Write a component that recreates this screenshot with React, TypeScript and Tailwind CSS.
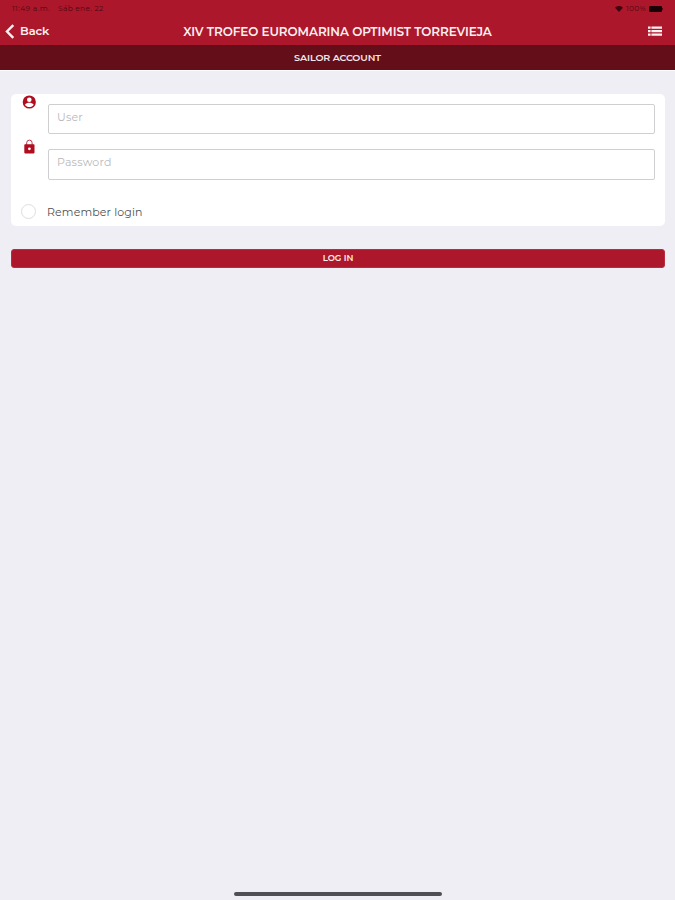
const StatusBar = () => (
  <div className="flex h-[17px] items-center justify-between pr-3 pl-[12px] text-[7.5px] text-[#4d0812]">
    <div className="flex gap-[8px] whitespace-pre">
      <span className="tracking-[0.4px]">11:49 a.m.</span>
      <span className="tracking-[0.3px]">Sáb ene. 22</span>
    </div>
    <div className="flex items-center">
      <svg className="mr-[3px] h-[6px] w-[8px]" viewBox="0 0 16 12" fill="#3d0710">
        <path d="M8 12 0 3.5C4.5-1 11.5-1 16 3.5Z" />
      </svg>
      <span className="mr-[3px] tracking-[0.3px]">100%</span>
      <svg className="h-[6px] w-[14px]" viewBox="0 0 14 6" fill="#180206">
        <rect width="13" height="6" rx="1.2" />
        <rect x="13.400" y="2" width="0.600" height="2" />
      </svg>
    </div>
  </div>
);

const NavBar = () => (
  <div className="grid h-7 grid-cols-[1fr_auto_1fr] items-center text-[#fdf0f1]">
    <button className="flex items-center pl-[5px]">
      <svg className="h-[15px] w-[10px]" viewBox="0 0 10 15" fill="none" stroke="currentColor" strokeWidth="2.4">
        <path d="M8.3 1.200 2 7.5 8.3 13.800" />
      </svg>
      <span className="ml-[5px] pt-px text-[11.500px] leading-none font-semibold tracking-[-0.100px]">Back</span>
    </button>
    <h1 className="pt-px text-[12px] leading-none font-semibold tracking-[-0.070px] whitespace-nowrap">
      XIV TROFEO EUROMARINA OPTIMIST TORREVIEJA
    </h1>
    <button className="flex justify-end pr-[13px]">
      <svg className="h-[10px] w-[14px]" viewBox="0 0 14 10" fill="currentColor">
        <path d="M0 .5h2.6v2.200H0zM3.400.5H14v2.200H3.400zM0 4h2.6v2.200H0zM3.400 4H14v2.200H3.400zM0 7.5h2.6v2.200H0zM3.400 7.5H14v2.200H3.400z" />
      </svg>
    </button>
  </div>
);

const UserIcon = () => (
  <svg className="h-[14px] w-[14px]" viewBox="0 0 14 14">
    <circle cx="7.3" cy="7" r="6.6" fill="#b00d20" />
    <circle cx="7.3" cy="4.7" r="2.3" fill="white" />
    <path d="M2.900 9.8C3.800 8.3 5.800 7.8 7.300 7.8s3.5.5 4.4 2C10.700 11.300 9.100 12.100 7.300 12.100S3.900 11.300 2.900 9.800Z" fill="white" />
  </svg>
);

const LockIcon = () => (
  <svg className="h-[15px] w-[14px]" viewBox="0 0 14 15">
    <path d="M4.700 6V3.800a2.700 2.700 0 0 1 5.400 0V6" fill="none" stroke="#b9364a" strokeWidth="1" />
    <rect x="2.300" y="5.300" width="10.200" height="9.100" rx="0.800" fill="#b00d20" />
    <circle cx="7.400" cy="9.800" r="1.400" fill="white" />
  </svg>
);

const inputClass =
  'block w-full rounded-[2px] border border-[#cfcfd1] bg-white pb-[5px] pl-[8px] text-[11px] tracking-[0.200px] outline-none placeholder:text-[#b9b9bb]';

export default function App() {
  return (
    <div className="flex h-[900px] w-full flex-col bg-[#efeef4] font-['Montserrat','Inter',sans-serif]">
      <header className="bg-[#ad172b]">
        <StatusBar />
        <NavBar />
      </header>
      <div className="flex h-[26px] items-center justify-center border-b border-white bg-[#630e19]">
        <h2 className="pt-px text-[9.500px] leading-none font-semibold tracking-[-0.100px] text-[#f8eaec]">SAILOR ACCOUNT</h2>
      </div>

      <main className="flex-1 pt-[23px] pr-[10px] pl-[11px]">
        <div className="h-[132px] rounded-[5px] bg-white pr-[10px]">
          <div className="flex pt-px pl-[11px]">
            <UserIcon />
            <div className="mt-[9px] ml-[12px] flex-1">
              <input type="text" placeholder="User" className={`${inputClass} h-[30px]`} />
            </div>
          </div>
          <div className="flex pt-[5px] pl-[11px]">
            <LockIcon />
            <div className="mt-[10px] ml-[12px] flex-1">
              <input type="password" placeholder="Password" className={`${inputClass} h-[31px]`} />
            </div>
          </div>
          <label className="mt-[24px] flex items-center pl-[10px]">
            <span className="h-[15px] w-[15px] rounded-full border border-[#dedee0]" />
            <span className="ml-[11px] pt-px text-[11px] leading-none tracking-[0.130px] text-[#505052]">Remember login</span>
          </label>
        </div>

        <button className="mt-[23px] flex h-[19px] w-full items-center justify-center rounded-[3px] border border-[#b92c3e] bg-[#ad172b] text-[8.500px] leading-none font-semibold text-[#fdeff1]">
          LOG IN
        </button>
      </main>

      <div className="mx-auto mb-[4px] h-[4px] w-[208px] rounded-full bg-[#504f54]" />
    </div>
  );
}
